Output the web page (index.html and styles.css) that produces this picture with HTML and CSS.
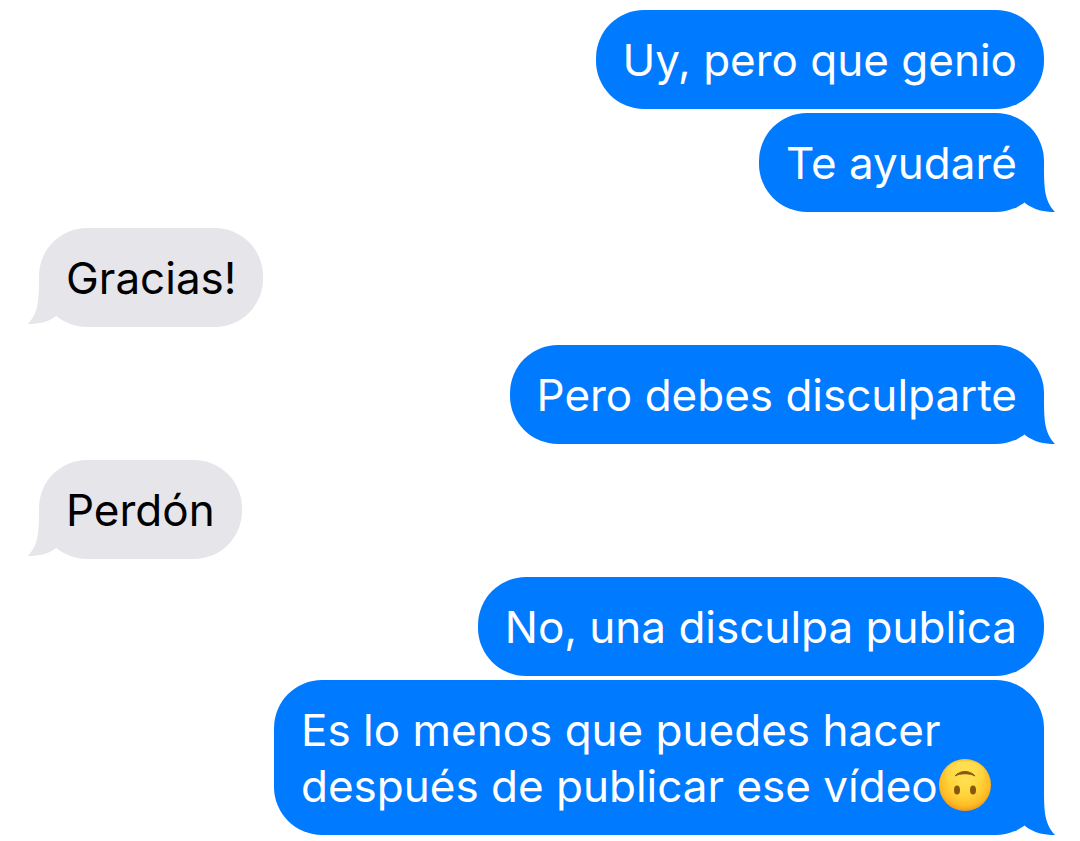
FILE: index.html
```html
<!DOCTYPE html>
<html lang="es">
<head>
<meta charset="utf-8">
<meta name="viewport" content="width=device-width, initial-scale=1">
<title>Mensajes</title>
<link rel="stylesheet" href="styles.css">
</head>
<body>
<main class="chat">
  <section class="group sent">
    <p class="bubble">Uy, pero que genio</p>
    <p class="bubble">Te ayudaré<svg class="tail" viewBox="0 0 44 50" aria-hidden="true"><path d="M32 0C32 26 32 38 43 50C32 50 22 48 13 41V20Z"/></svg></p>
  </section>
  <section class="group received">
    <p class="bubble">Gracias!<svg class="tail" viewBox="0 0 44 50" aria-hidden="true"><path d="M32 0C32 26 32 38 43 50C32 50 22 48 15 42V20Z"/></svg></p>
  </section>
  <section class="group sent">
    <p class="bubble">Pero debes disculparte<svg class="tail" viewBox="0 0 44 50" aria-hidden="true"><path d="M32 0C32 26 32 38 43 50C32 50 22 48 13 41V20Z"/></svg></p>
  </section>
  <section class="group received">
    <p class="bubble">Perdón<svg class="tail" viewBox="0 0 44 50" aria-hidden="true"><path d="M32 0C32 26 32 38 43 50C32 50 22 48 15 42V20Z"/></svg></p>
  </section>
  <section class="group sent">
    <p class="bubble">No, una disculpa publica</p>
    <p class="bubble">Es lo menos que puedes hacer después de publicar ese vídeo<svg class="emoji" viewBox="0 0 54 54" role="img" aria-label="Cara al revés">
      <defs>
        <radialGradient id="face" cx=".5" cy=".42" r=".6"><stop offset="0" stop-color="#ffe052"/><stop offset=".5" stop-color="#ffd338"/><stop offset=".8" stop-color="#fdbb26"/><stop offset="1" stop-color="#ef9312"/></radialGradient>
        <linearGradient id="shine" x1="0" y1="0" x2="0" y2="1"><stop offset="0" stop-color="#fff27a" stop-opacity=".5"/><stop offset="1" stop-color="#ffe052" stop-opacity="0"/></linearGradient>
      </defs>
      <circle cx="27" cy="27" r="26" fill="url(#face)"/>
      <ellipse cx="27" cy="16" rx="20" ry="13" fill="url(#shine)"/>
      <path d="M17 18C22 12 32 12 37 18C32 15 22 15 17 18Z" fill="#87570f" stroke="#87570f" stroke-width="1" stroke-linejoin="round"/>
      <ellipse cx="19" cy="32" rx="3" ry="4.5" fill="#87570f"/>
      <ellipse cx="35" cy="32" rx="3" ry="4.5" fill="#87570f"/>
    </svg><svg class="tail" viewBox="0 0 44 50" aria-hidden="true"><path d="M32 0C32 26 32 38 43 50C32 50 22 48 13 41V20Z"/></svg></p>
  </section>
</main>
</body>
</html>
```
FILE: styles.css
```css
body {
  margin: 0;
  background: #fff;
  font-family: Inter, Roboto, sans-serif;
  font-size: 44px;
  line-height: 56px;
}
.chat {
  display: flex;
  flex-direction: column;
  gap: 16px;
  padding: 10px 36px 5px 39px;
}
.group {
  display: flex;
  flex-direction: column;
  gap: 4px;
}
.sent {
  align-items: flex-end;
  --bubble: #007aff;
  color: #fff;
}
.received {
  align-items: flex-start;
  margin-bottom: 2px;
  --bubble: #e5e5ea;
  color: #000;
}
.bubble {
  position: relative;
  box-sizing: border-box;
  max-width: 770px;
  margin: 0;
  padding: 22px 27px 21px;
  border-radius: 48px;
  background: var(--bubble);
}
.tail {
  position: absolute;
  right: -12px;
  bottom: 0;
  width: 44px;
  height: 50px;
  fill: var(--bubble);
}
.received .tail {
  right: auto;
  left: -12px;
  bottom: 3px;
  transform: scaleX(-1);
}
.emoji {
  width: 54px;
  height: 54px;
  margin-block: -6px;
  vertical-align: -4px;
}
```
